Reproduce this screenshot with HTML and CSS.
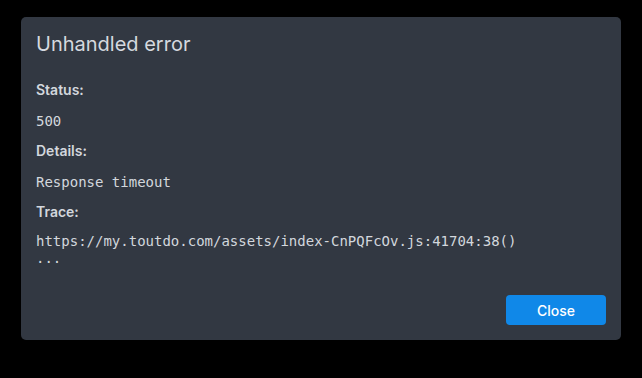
FILE: index.html
```html
<!DOCTYPE html>
<html lang="en">
<head>
<meta charset="utf-8">
<title>Unhandled error</title>
<link rel="stylesheet" href="styles.css">
</head>
<body>
<div class="dialog">
  <h2 class="title">Unhandled error</h2>
  <div class="content">
    <div class="label">Status:</div>
    <div class="mono">500</div>
    <div class="label">Details:</div>
    <div class="mono">Response timeout</div>
    <div class="label">Trace:</div>
    <pre class="mono trace">https://my.toutdo.com/assets/index-CnPQFcOv.js:41704:38()
...</pre>
  </div>
  <div class="footer">
    <button class="btn">Close</button>
  </div>
</div>
</body>
</html>
```
FILE: styles.css
```css
html, body {
  margin: 0;
  padding: 0;
  background: #000;
  width: 642px;
  height: 378px;
  overflow: hidden;
}
body {
  padding: 17px 0 0 21px;
  box-sizing: border-box;
  font-family: Inter, "Noto Sans", sans-serif;
}
.dialog {
  width: 600px;
  height: 323px;
  box-sizing: border-box;
  background: #323842;
  border-radius: 5px;
  padding: 15px 15px 15px 15px;
  display: flex;
  flex-direction: column;
  color: #d3d7dd;
}
.title {
  margin: 0;
  font-size: 20px;
  font-weight: 400;
  line-height: 24px;
  color: #d5d9df;
}
.content {
  margin-top: 24px;
  display: flex;
  flex-direction: column;
  gap: 10.5px;
}
.label {
  font-size: 14px;
  font-weight: 600;
  line-height: 20px;
  color: #d3d7dd;
}
.mono {
  font-family: "DejaVu Sans Mono", monospace;
  font-size: 14px;
  line-height: 20px;
  color: #d3d7dd;
}
.trace {
  margin: 0;
  line-height: 17px;
  margin-top: 0;
}
.footer {
  margin-top: auto;
  display: flex;
  justify-content: flex-end;
}
.btn {
  width: 100px;
  height: 30px;
  border: none;
  border-radius: 4px;
  background: #1088e8;
  color: #fff;
  font-family: Inter, "Noto Sans", sans-serif;
  font-size: 14px;
  font-weight: 500;
  cursor: pointer;
}
```
